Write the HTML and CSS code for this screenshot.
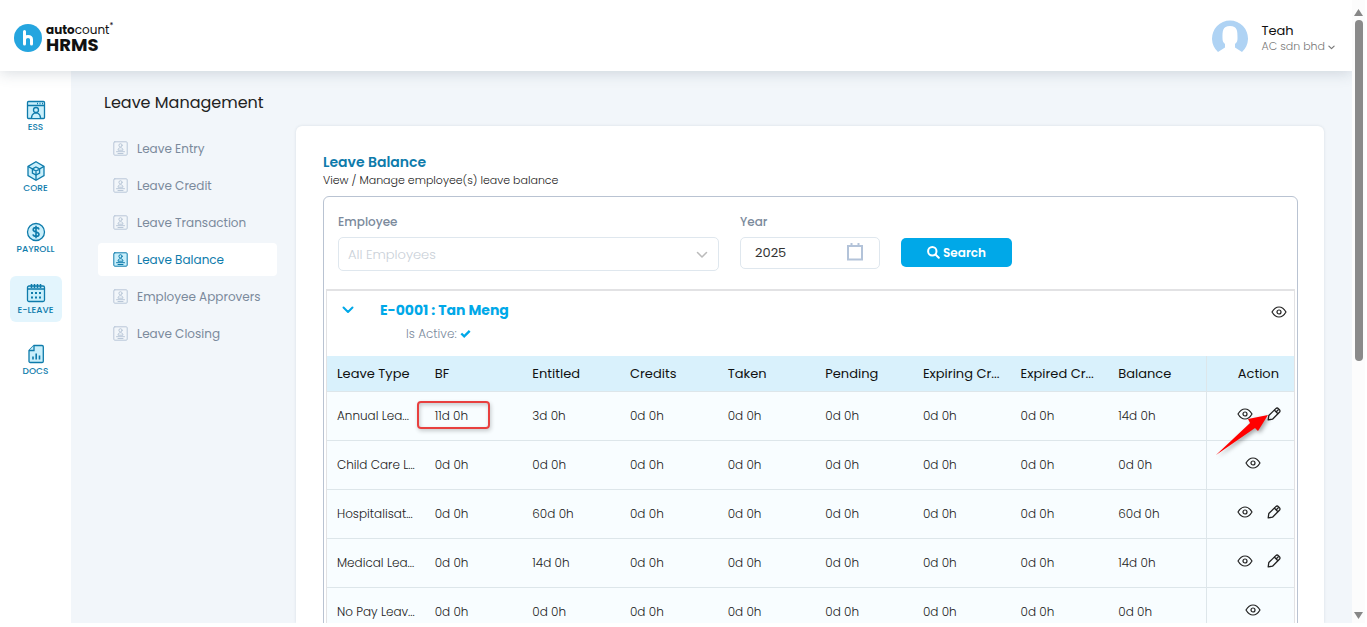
FILE: index.html
```
<!DOCTYPE html>
<html lang="en">
<head>
    <meta charset="UTF-8">
    <meta name="viewport" content="width=device-width, initial-scale=1.0">
    <title>Leave Balance</title>
    <link rel="stylesheet" href="styles.css">
</head>
<body>
    <!-- shared icons -->
    <svg class="sprite" aria-hidden="true">
        <symbol id="eye" viewBox="0 0 16 12">
            <path d="M1 6C3 2.6 5.3 1 8 1s5 1.6 7 5c-2 3.4-4.3 5-7 5S3 9.4 1 6z"/>
            <circle cx="8" cy="6" r="2"/>
        </symbol>
        <symbol id="pencil" viewBox="0 0 14 14">
            <path d="M1.200 12.800l.6-4.300L8.800 1.600c.8-.8 1.800-.8 2.600 0l1 1c.8.8.8 1.800 0 2.600L5.500 12.200z"/>
            <path d="M7.500 3.300l3.200 3.200M9.300 4.700l2-2"/>
        </symbol>
        <symbol id="chevron" viewBox="0 0 12 8">
            <path d="M1.5 1.5L6 6l4.500-4.500"/>
        </symbol>
        <symbol id="badge" viewBox="0 0 15 15">
            <rect class="tint" x=".8" y=".8" width="13.400" height="13.400" rx="1"/>
            <circle cx="7.500" cy="4.300" r="1.600"/>
            <path d="M5 8.800c0-3 5-3 5 0zM3.500 10.700h8M5 12.500h5"/>
        </symbol>
    </svg>

    <div class="window">
        <div class="app">
            <header class="topbar">
                <a href="#" class="logo">
                    <svg class="logo-mark" viewBox="0 0 28 28" aria-hidden="true">
                        <circle cx="14" cy="14" r="14" fill="#25a5df"/>
                        <path d="M10.500 7.500V20M10.500 15.500c0-4 7-4 7 0V20" fill="none" stroke="#fff" stroke-width="3" stroke-linecap="round"/>
                    </svg>
                    <span class="logo-text">
                        <span class="logo-top"><b>auto</b>count<sup>*</sup></span>
                        <span class="logo-bottom">HRMS</span>
                    </span>
                </a>
                <button type="button" class="user">
                    <svg class="avatar" viewBox="0 0 36 36" aria-hidden="true">
                        <path d="M6 32A18 18 0 1 1 30 32L23 27.500V24c2-1.500 2.500-3 2.500-6 0-7 0-12-7.500-12s-7.500 5-7.500 12c0 3 .5 4.500 2.500 6v3.500z" fill="#afd3f4"/>
                    </svg>
                    <span class="user-text">
                        <span class="user-name">Teah</span>
                        <span class="user-company">AC sdn bhd <svg class="icon caret"><use href="#chevron"/></svg></span>
                    </span>
                </button>
            </header>

            <div class="body">
                <nav class="sidebar">
                    <a href="#" class="module">
                        <svg class="module-icon" viewBox="0 0 20 20">
                            <rect x="1.500" y="1.500" width="17" height="17" rx="1"/>
                            <path d="M1.500 5.500h17M11 3.500h1M13.500 3.500h1M16 3.500h1"/>
                            <circle cx="10" cy="10" r="2.500"/>
                            <path d="M5.500 18c0-2.500 1-4 3-5h3c2 1 3 2.500 3 5"/>
                        </svg>
                        <span>ESS</span>
                    </a>
                    <a href="#" class="module">
                        <svg class="module-icon" viewBox="0 0 20 20">
                            <path d="M10 .8l8 4.600v9.200l-8 4.600-8-4.600V5.400z"/>
                            <path d="M2 5.400l4.500 2.600M18 5.400L13.500 8M10 13v6"/>
                            <path d="M10 6l3.600 2v4L10 14l-3.600-2V8zM6.400 8l3.600 2 3.600-2M10 10v4"/>
                        </svg>
                        <span>CORE</span>
                    </a>
                    <a href="#" class="module">
                        <svg class="module-icon" viewBox="0 0 20 20">
                            <circle cx="10" cy="10" r="8.500"/>
                            <path class="line" d="M13 7.500C12.500 5 7.200 5 7.200 7.700c0 2.800 5.800 1.600 5.800 4.600 0 2.800-5.500 2.800-6 0M10 3.800v12.400"/>
                        </svg>
                        <span>PAYROLL</span>
                    </a>
                    <a href="#" class="module active">
                        <svg class="module-icon" viewBox="0 0 20 20">
                            <rect x="1.500" y="3" width="17" height="15.500" rx="1.500"/>
                            <path class="line" d="M1.500 6h17M5.500 1v4M8.500 1v4M11.500 1v4M14.500 1v4"/>
                            <path class="dots" d="M5 10h2M9 10h2M13 10h2M5 14.500h2M9 14.500h2M13 14.500h2"/>
                        </svg>
                        <span>E-LEAVE</span>
                    </a>
                    <a href="#" class="module">
                        <svg class="module-icon" viewBox="0 0 20 20">
                            <path d="M8 1.500h8c.8 0 1.300.5 1.300 1.300v14.400c0 .8-.5 1.300-1.300 1.300H4.300c-.8 0-1.300-.5-1.300-1.300V6.500z"/>
                            <path d="M8 1.500v5H3"/>
                            <path class="line" d="M7 15.500v-3M10.200 15.500V9.500M13.500 15.500v-4"/>
                        </svg>
                        <span>DOCS</span>
                    </a>
                </nav>

                <main class="content">
                    <h1 class="page-title">Leave Management</h1>
                    <div class="columns">
                        <nav class="submenu">
                            <a href="#" class="sub-item"><svg class="icon sub-icon"><use href="#badge"/></svg>Leave Entry</a>
                            <a href="#" class="sub-item"><svg class="icon sub-icon"><use href="#badge"/></svg>Leave Credit</a>
                            <a href="#" class="sub-item"><svg class="icon sub-icon"><use href="#badge"/></svg>Leave Transaction</a>
                            <a href="#" class="sub-item active"><svg class="icon sub-icon"><use href="#badge"/></svg>Leave Balance</a>
                            <a href="#" class="sub-item"><svg class="icon sub-icon"><use href="#badge"/></svg>Employee Approvers</a>
                            <a href="#" class="sub-item"><svg class="icon sub-icon"><use href="#badge"/></svg>Leave Closing</a>
                        </nav>

                        <section class="card">
                            <h2 class="card-title">Leave Balance</h2>
                            <p class="card-subtitle">View / Manage employee(s) leave balance</p>

                            <div class="panel">
                                <form class="filters">
                                    <div class="field field-employee">
                                        <label for="employee">Employee</label>
                                        <div class="control">
                                            <select id="employee">
                                                <option>All Employees</option>
                                            </select>
                                            <svg class="icon select-caret"><use href="#chevron"/></svg>
                                        </div>
                                    </div>
                                    <div class="field field-year">
                                        <label for="year">Year</label>
                                        <div class="control">
                                            <input id="year" type="text" value="2025">
                                            <svg class="calendar" viewBox="0 0 16 18">
                                                <path d="M1 3h14v13.500H1zM4.500 0v4M11.500 0v4"/>
                                            </svg>
                                        </div>
                                    </div>
                                    <button type="button" class="search">
                                        <svg class="search-icon" viewBox="0 0 13 13"><circle cx="5.300" cy="5.300" r="4.200"/><path d="M8.500 8.500l3.300 3.300"/></svg>
                                        Search
                                    </button>
                                </form>

                                <div class="employee">
                                    <div class="employee-head">
                                        <button type="button" class="icon-btn toggle" aria-label="Collapse"><svg class="icon toggle-icon"><use href="#chevron"/></svg></button>
                                        <div class="employee-info">
                                            <h3 class="employee-name">E-0001 : Tan Meng</h3>
                                            <p class="employee-status">Is Active: <svg class="check" viewBox="0 0 11 9"><path d="M1.300 4.500l2.900 2.800 5.500-5.500"/></svg></p>
                                        </div>
                                        <button type="button" class="icon-btn" aria-label="View"><svg class="icon eye"><use href="#eye"/></svg></button>
                                    </div>

                                    <table class="balance">
                                        <thead>
                                            <tr>
                                                <th>Leave Type</th>
                                                <th>BF</th>
                                                <th>Entitled</th>
                                                <th>Credits</th>
                                                <th>Taken</th>
                                                <th>Pending</th>
                                                <th>Expiring Cr...</th>
                                                <th>Expired Cr...</th>
                                                <th>Balance</th>
                                                <th class="action">Action</th>
                                            </tr>
                                        </thead>
                                        <tbody>
                                            <tr>
                                                <td>Annual Lea...</td>
                                                <td class="marked">11d 0h<span class="mark-box"></span></td>
                                                <td>3d 0h</td>
                                                <td>0d 0h</td>
                                                <td>0d 0h</td>
                                                <td>0d 0h</td>
                                                <td>0d 0h</td>
                                                <td>0d 0h</td>
                                                <td>14d 0h</td>
                                                <td class="action marked">
                                                    <div class="actions editable">
                                                        <button type="button" class="icon-btn" aria-label="View"><svg class="icon eye"><use href="#eye"/></svg></button>
                                                        <button type="button" class="icon-btn" aria-label="Edit"><svg class="icon pencil"><use href="#pencil"/></svg></button>
                                                    </div>
                                                    <svg class="mark-arrow" viewBox="0 0 56 42"><path d="M1 41L35 9l-2-4L53 1 43 17l-3-3z" fill="#f00"/></svg>
                                                </td>
                                            </tr>
                                            <tr>
                                                <td>Child Care L...</td>
                                                <td>0d 0h</td>
                                                <td>0d 0h</td>
                                                <td>0d 0h</td>
                                                <td>0d 0h</td>
                                                <td>0d 0h</td>
                                                <td>0d 0h</td>
                                                <td>0d 0h</td>
                                                <td>0d 0h</td>
                                                <td class="action">
                                                    <div class="actions">
                                                        <button type="button" class="icon-btn" aria-label="View"><svg class="icon eye"><use href="#eye"/></svg></button>
                                                    </div>
                                                </td>
                                            </tr>
                                            <tr>
                                                <td>Hospitalisat...</td>
                                                <td>0d 0h</td>
                                                <td>60d 0h</td>
                                                <td>0d 0h</td>
                                                <td>0d 0h</td>
                                                <td>0d 0h</td>
                                                <td>0d 0h</td>
                                                <td>0d 0h</td>
                                                <td>60d 0h</td>
                                                <td class="action">
                                                    <div class="actions editable">
                                                        <button type="button" class="icon-btn" aria-label="View"><svg class="icon eye"><use href="#eye"/></svg></button>
                                                        <button type="button" class="icon-btn" aria-label="Edit"><svg class="icon pencil"><use href="#pencil"/></svg></button>
                                                    </div>
                                                </td>
                                            </tr>
                                            <tr>
                                                <td>Medical Lea...</td>
                                                <td>0d 0h</td>
                                                <td>14d 0h</td>
                                                <td>0d 0h</td>
                                                <td>0d 0h</td>
                                                <td>0d 0h</td>
                                                <td>0d 0h</td>
                                                <td>0d 0h</td>
                                                <td>14d 0h</td>
                                                <td class="action">
                                                    <div class="actions editable">
                                                        <button type="button" class="icon-btn" aria-label="View"><svg class="icon eye"><use href="#eye"/></svg></button>
                                                        <button type="button" class="icon-btn" aria-label="Edit"><svg class="icon pencil"><use href="#pencil"/></svg></button>
                                                    </div>
                                                </td>
                                            </tr>
                                            <tr>
                                                <td>No Pay Leav...</td>
                                                <td>0d 0h</td>
                                                <td>0d 0h</td>
                                                <td>0d 0h</td>
                                                <td>0d 0h</td>
                                                <td>0d 0h</td>
                                                <td>0d 0h</td>
                                                <td>0d 0h</td>
                                                <td>0d 0h</td>
                                                <td class="action">
                                                    <div class="actions">
                                                        <button type="button" class="icon-btn" aria-label="View"><svg class="icon eye"><use href="#eye"/></svg></button>
                                                    </div>
                                                </td>
                                            </tr>
                                        </tbody>
                                    </table>
                                </div>
                            </div>
                        </section>
                    </div>
                </main>
            </div>
        </div>

        <div class="scrollbar" aria-hidden="true">
            <svg class="scroll-arrow" viewBox="0 0 9 7"><path d="M4.500 0L9 7H0z"/></svg>
            <div class="scroll-track"><div class="scroll-thumb"></div></div>
            <svg class="scroll-arrow" viewBox="0 0 9 7"><path d="M0 0h9L4.500 7z"/></svg>
        </div>
    </div>
</body>
</html>
```
FILE: styles.css
```
:root {
    --blue: #00a8e8;
    --dark-blue: #0e7bab;
    --page-bg: #f2f6fa;
    --muted: #7b8a9c;
    --line: #dfe7ee;
    --tint: #c9effb;
}

* {
    margin: 0;
    padding: 0;
    box-sizing: border-box;
}

body {
    height: 100vh;
    padding-bottom: 4px;
    overflow: hidden;
    background: #fff;
    color: #222;
    font-family: Poppins, Inter, "Open Sans", sans-serif;
    font-size: 12px;
}

a {
    color: inherit;
    text-decoration: none;
}

button,
input,
select {
    font: inherit;
    border: none;
    background: none;
}

.sprite {
    position: absolute;
    width: 0;
    height: 0;
}

.icon {
    fill: none;
    stroke: currentColor;
    stroke-linecap: round;
    stroke-linejoin: round;
}

.window {
    display: flex;
    height: 100%;
    padding-right: 2px;
}

.app {
    display: flex;
    flex: 1;
    flex-direction: column;
    min-width: 0;
    overflow: hidden;
}

/* top bar */
.topbar {
    position: relative;
    z-index: 1;
    display: flex;
    flex: none;
    justify-content: space-between;
    align-items: center;
    height: 71px;
    padding: 4px 17px 0 14px;
    background: #fff;
    box-shadow: 0 2px 14px rgba(60, 80, 100, 0.2);
}

.logo {
    display: flex;
    align-items: center;
    gap: 4px;
    color: #111;
}

.logo-mark {
    width: 28px;
    height: 28px;
}

.logo-text {
    display: flex;
    flex-direction: column;
}

.logo-top {
    font-size: 12px;
    line-height: 14px;
}

.logo-top sup {
    font-size: 8px;
    line-height: 1px;
}

.logo-bottom {
    font-size: 18px;
    font-weight: 700;
    line-height: 16px;
}

.user {
    display: flex;
    align-items: center;
    gap: 13px;
    text-align: left;
}

.avatar {
    width: 36px;
    height: 36px;
}

.user-text {
    display: flex;
    flex-direction: column;
}

.user-name {
    color: #111;
    font-size: 13px;
    font-weight: 400;
    line-height: 16px;
}

.user-company {
    color: #777;
    font-size: 11px;
    font-weight: 300;
    line-height: 14px;
}

.caret {
    width: 7px;
    height: 5px;
    stroke-width: 2;
}

/* module bar */
.body {
    display: flex;
    flex: 1;
    min-height: 0;
}

.sidebar {
    display: flex;
    flex: none;
    flex-direction: column;
    align-items: center;
    gap: 15px;
    width: 71px;
    padding-top: 22px;
    background: #fff;
    box-shadow: 0 0 12px rgba(60, 80, 100, 0.12);
}

.module {
    display: flex;
    flex: none;
    flex-direction: column;
    align-items: center;
    gap: 1px;
    width: 52px;
    height: 46px;
    padding-top: 7px;
    border-radius: 6px;
    color: var(--dark-blue);
    font-size: 9px;
    font-weight: 500;
    line-height: 13px;
}

.module.active {
    background: #e3f5fd;
}

.module-icon {
    width: 20px;
    height: 20px;
    fill: var(--tint);
    stroke: var(--dark-blue);
    stroke-width: 1.3;
}

.module-icon .line {
    fill: none;
    stroke-width: 1.6;
}

.module-icon .dots {
    stroke-width: 2;
}

/* content */
.content {
    display: flex;
    flex: 1;
    flex-direction: column;
    min-width: 0;
    padding: 20px 28px 0 27px;
    background: var(--page-bg);
}

.page-title {
    padding-left: 6px;
    margin-bottom: 11px;
    font-size: 16px;
    font-weight: 400;
    line-height: 24px;
}

.columns {
    display: flex;
    flex: 1;
    gap: 19px;
    min-height: 0;
}

.submenu {
    display: flex;
    flex: none;
    flex-direction: column;
    gap: 4px;
    width: 179px;
    padding-top: 6px;
}

.sub-item {
    display: flex;
    align-items: center;
    gap: 9px;
    height: 33px;
    padding-left: 15px;
    border-radius: 4px;
    color: var(--muted);
    font-size: 12px;
    font-weight: 400;
}

.sub-item.active {
    background: #fff;
    color: var(--dark-blue);
}

.sub-icon {
    width: 15px;
    height: 15px;
    color: #b9c7d8;
}

.sub-item.active .sub-icon {
    color: var(--dark-blue);
    fill: var(--tint);
}

.card {
    flex: 1;
    min-width: 0;
    padding: 26px 26px 0 27px;
    border-radius: 6px 6px 0 0;
    background: #fff;
    box-shadow: 0 0 3px rgba(60, 80, 100, 0.15);
}

.card-title {
    color: var(--dark-blue);
    font-size: 14px;
    font-weight: 600;
    line-height: 20px;
}

.card-subtitle {
    margin-bottom: 7px;
    font-size: 11px;
    font-weight: 300;
    line-height: 17px;
}

.panel {
    padding: 0 2px;
    border: 1px solid #b9c3d2;
    border-radius: 6px;
}

/* filters */
.filters {
    display: flex;
    align-items: flex-start;
    gap: 21px;
    padding: 16px 12px 18px;
}

.field label {
    display: block;
    margin-bottom: 6px;
    color: var(--muted);
    font-size: 12px;
    font-weight: 500;
    line-height: 18px;
}

.field-employee {
    flex: 0 1 381px;
}

.field-year {
    flex: 0 1 140px;
}

.control {
    position: relative;
}

.control select,
.control input {
    width: 100%;
    height: 34px;
    padding: 0 9px;
    border: 1px solid var(--line);
    border-radius: 5px;
    appearance: none;
    color: #c9d0d8;
    font-size: 13px;
    font-weight: 300;
}

.control input {
    height: 32px;
    padding-left: 14px;
    color: #333;
    font-weight: 400;
}

.select-caret {
    position: absolute;
    top: 14px;
    right: 11px;
    width: 12px;
    height: 8px;
    color: #bbb;
    stroke-width: 1.5;
}

.calendar {
    position: absolute;
    top: 6px;
    right: 17px;
    width: 16px;
    height: 18px;
    fill: none;
    stroke: #b3c3d9;
    stroke-width: 2;
}

.search {
    display: flex;
    justify-content: center;
    align-items: center;
    gap: 3px;
    width: 111px;
    height: 29px;
    margin-top: 25px;
    border-radius: 5px;
    background: var(--blue);
    color: #fff;
    font-size: 12px;
    font-weight: 600;
}

.search-icon {
    width: 13px;
    height: 13px;
    fill: none;
    stroke: #fff;
    stroke-width: 2;
    stroke-linecap: round;
}

/* employee block */
.employee {
    border: 2px solid #e2e2e4;
    border-width: 2px 1px 0 1px;
}

.employee-head {
    display: flex;
    align-items: flex-start;
    height: 65px;
    padding: 8px 7px 0 15px;
}

.icon-btn {
    display: flex;
    color: #222;
}

.toggle {
    margin: 7px 26px 0 0;
    color: var(--blue);
}

.toggle-icon {
    width: 12px;
    height: 8px;
    stroke-width: 2;
}

.employee-head .eye {
    margin-top: 7px;
}

.employee-info {
    flex: 1;
}

.employee-name {
    color: var(--blue);
    font-size: 14px;
    font-weight: 700;
    line-height: 22px;
}

.employee-status {
    padding: 4px 0 0 26px;
    color: var(--muted);
    font-size: 12px;
    font-weight: 300;
    line-height: 18px;
}

.check {
    width: 11px;
    height: 9px;
    fill: none;
    stroke: var(--blue);
    stroke-width: 2.4;
}

.eye {
    width: 16px;
    height: 12px;
    stroke-width: 1.2;
}

.pencil {
    width: 14px;
    height: 14px;
    stroke-width: 1.3;
}

.balance {
    width: 100%;
    table-layout: fixed;
    border-collapse: separate;
    border-spacing: 0;
}

.balance th,
.balance td {
    padding: 0 0 0 10px;
    border-bottom: 1px solid #dde6ea;
    text-align: left;
    white-space: nowrap;
}

.balance th {
    height: 36px;
    background: #d9f1fc;
    color: #111;
    font-size: 13px;
    font-weight: 400;
}

.balance td {
    height: 49px;
    background: #f8fdff;
    font-size: 12px;
    font-weight: 300;
}

.balance .action {
    width: 88px;
    padding: 0 5px 0 10px;
    border-left: 1px solid #dde6ea;
}

.balance th.action {
    padding: 0 15px 0 0;
    text-align: right;
}

.actions {
    display: flex;
    justify-content: center;
    align-items: center;
    gap: 14px;
    padding-bottom: 5px;
}

.actions.editable {
    padding-left: 12px;
}

/* markers over the first row */
.marked {
    position: relative;
}

.mark-box {
    position: absolute;
    top: 9px;
    left: -8px;
    width: 73px;
    height: 28px;
    border: 2px solid #e8403f;
    border-radius: 4px;
    box-shadow: 1px 2px 4px rgba(0, 0, 0, 0.2), inset 1px 2px 4px rgba(0, 0, 0, 0.2);
}

.mark-arrow {
    position: absolute;
    top: 22px;
    left: 8px;
    width: 56px;
    height: 42px;
    z-index: 1;
    overflow: visible;
    filter: drop-shadow(2px 2px 2px rgba(0, 0, 0, 0.35));
}

/* scrollbar */
.scrollbar {
    display: flex;
    flex: none;
    flex-direction: column;
    align-items: center;
    gap: 4px;
    width: 13px;
    padding: 9px 0 4px;
    background: #fcfcfc;
}

.scroll-arrow {
    width: 9px;
    height: 7px;
    fill: #878787;
}

.scroll-track {
    flex: 1;
}

.scroll-thumb {
    width: 8px;
    height: 58%;
    border-radius: 4px;
    background: #8a8a8a;
}
```
